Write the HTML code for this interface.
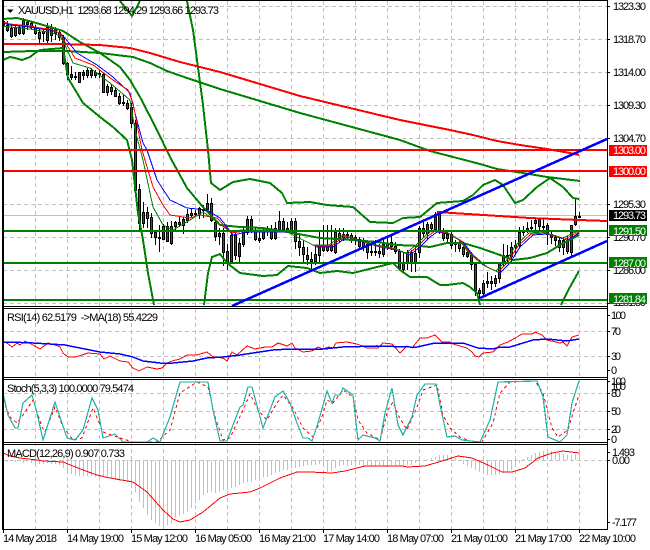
<!DOCTYPE html>
<html><head><meta charset="utf-8"><title>XAUUSD,H1</title>
<style>
html,body{margin:0;padding:0;background:#fff;width:650px;height:550px;overflow:hidden}
svg{display:block;position:absolute;left:0;top:0}
text{font-family:"Liberation Sans",sans-serif;font-size:11px;fill:#000}
.w{fill:#fff}
</style></head><body>
<svg width="650" height="550" viewBox="0 0 650 550" xmlns="http://www.w3.org/2000/svg">
<rect width="650" height="550" fill="#fff"/>
<g fill="none" shape-rendering="crispEdges">
<!-- grid -->
<path stroke="#c0c0c0" stroke-dasharray="4 3" d="M3 6.5H607M3 39.5H607M3 72.5H607M3 105.5H607M3 138.5H607M3 204.5H607M3 237.5H607M3 270.5H607M3 303.5H607M3 331.5H607M3 356.5H607M3 393.5H607M3 411.5H607M3 429.5H607M3 460.5H607"/>
<path stroke="#c0c0c0" stroke-dasharray="4 3" d="M35.5 1V529M67.5 1V529M99.5 1V529M131.5 1V529M163.5 1V529M195.5 1V529M227.5 1V529M259.5 1V529M291.5 1V529M323.5 1V529M355.5 1V529M387.5 1V529M419.5 1V529M451.5 1V529M483.5 1V529M515.5 1V529M547.5 1V529M579.5 1V529"/>
<path stroke="#c0c0c0" d="M3 215.5H607"/>
<!-- MACD histogram -->
<path stroke="#c0c0c0" d="M3.5 460V462M7.5 460V462M11.5 460V461M15.5 460V462M19.5 460V461M23.5 460V463M27.5 460V462M31.5 460V463M35.5 460V463M39.5 460V464M43.5 460V464M47.5 460V463M51.5 460V464M55.5 460V464M59.5 460V465M63.5 460V468M67.5 460V472M71.5 460V474M75.5 460V475M79.5 460V476M83.5 460V476M87.5 460V476M91.5 460V476M95.5 460V477M99.5 460V478M103.5 460V476M107.5 460V476M111.5 460V478M115.5 460V480M119.5 460V481M123.5 460V481M127.5 460V482M131.5 460V484M135.5 460V492M139.5 460V502M143.5 460V508M147.5 460V515M151.5 460V520M155.5 460V523M159.5 460V526M163.5 460V527M167.5 460V525M171.5 460V523M175.5 460V518M179.5 460V516M183.5 460V514M187.5 460V512M191.5 460V508M195.5 460V503M199.5 460V500M203.5 460V495M207.5 460V493M211.5 460V492M215.5 460V493M219.5 460V492M223.5 460V490M227.5 460V490M231.5 460V488M235.5 460V487M239.5 460V485M243.5 460V483M247.5 460V482M251.5 460V482M255.5 460V480M259.5 460V478M263.5 460V477M267.5 460V477M271.5 460V475M275.5 460V473M279.5 460V472M283.5 460V470M287.5 460V470M291.5 460V468M295.5 460V468M299.5 460V467M303.5 460V466M307.5 460V465M311.5 460V465M315.5 460V465M319.5 460V464M323.5 460V464M327.5 460V472M331.5 460V471M335.5 460V468M339.5 460V466M343.5 460V465M347.5 460V466M351.5 460V465M355.5 460V466M359.5 460V465M363.5 460V466M367.5 460V465M371.5 460V466M375.5 460V466M379.5 460V465M383.5 460V466M387.5 460V466M391.5 460V465M395.5 460V466M399.5 460V465M403.5 460V466M407.5 460V465M411.5 460V465M415.5 460V463M419.5 460V462M423.5 460V461M427.5 460V459M431.5 460V458M435.5 460V457M439.5 460V455M443.5 460V455M447.5 460V455M451.5 460V456M455.5 460V458M459.5 460V460M463.5 460V464M467.5 460V466M471.5 460V468M475.5 460V470M479.5 460V472M483.5 460V474M487.5 460V475M491.5 460V475M495.5 460V475M499.5 460V474M503.5 460V473M507.5 460V472M511.5 460V470M515.5 460V467M519.5 460V463M523.5 460V459M527.5 460V457M531.5 460V455M535.5 460V453M539.5 460V452M543.5 460V451M547.5 460V450M551.5 460V451M555.5 460V452M559.5 460V453M563.5 460V454M567.5 460V455M571.5 460V455M575.5 460V454M579.5 460V453"/>
<!-- candle wicks -->
<path stroke="#000" d="M3.5 19V29M7.5 21V32M11.5 24V38M15.5 24V37M19.5 25V35M23.5 18V35M27.5 20V30M31.5 21V30M35.5 25V35M39.5 29V44M43.5 28V42M47.5 23V44M51.5 24V42M55.5 27V40M59.5 29V41M63.5 35V65M67.5 62V80M71.5 66V80M75.5 72V80M79.5 72V83M83.5 70V80M87.5 68V78M91.5 68V78M95.5 70V78M99.5 70V78M103.5 73V93M107.5 84V96M111.5 84V95M115.5 87V97M119.5 93V105M123.5 95V106M127.5 100V110M131.5 103V128M135.5 120V192M139.5 184V230M143.5 202V228M147.5 207V228M151.5 213V238M155.5 232V245M159.5 225V252M163.5 224V240M167.5 222V242M171.5 221V245M175.5 221V232M179.5 217V227M183.5 217V234M187.5 209V223M191.5 209V218M195.5 210V217M199.5 207V219M203.5 205V218M207.5 194V213M211.5 198V222M215.5 220V241M219.5 228V245M223.5 228V266M227.5 244V270M231.5 230V263M235.5 230V260M239.5 238V262M243.5 228V247M247.5 216V235M251.5 216V233M255.5 228V241M259.5 232V243M263.5 228V240M267.5 226V236M271.5 225V240M275.5 222V240M279.5 211V231M283.5 218V232M287.5 222V233M291.5 218V233M295.5 218V249M299.5 233V256M303.5 240V262M307.5 247V265M311.5 252V272M315.5 245V265M319.5 232V263M323.5 225V252M327.5 225V252M331.5 225V252M335.5 228V254M339.5 228V243M343.5 228V241M347.5 230V240M351.5 233V243M355.5 235V245M359.5 237V250M363.5 238V251M367.5 243V259M371.5 245V256M375.5 240V256M379.5 244V258M383.5 240V257M387.5 237V250M391.5 235V250M395.5 242V254M399.5 249V270M403.5 252V272M407.5 250V270M411.5 250V272M415.5 246V272M419.5 226V258M423.5 222V238M427.5 222V240M431.5 222V232M435.5 212V232M439.5 212V234M443.5 228V241M447.5 232V243M451.5 232V249M455.5 240V252M459.5 240V252M463.5 245V257M467.5 248V258M471.5 252V270M475.5 262V296M479.5 288V300M483.5 280V296M487.5 272V288M491.5 276V290M495.5 275V287M499.5 262V283M503.5 244V266M507.5 245V262M511.5 242V262M515.5 240V255M519.5 227V248M523.5 226V236M527.5 222V233M531.5 220V232M535.5 219V230M539.5 218V230M543.5 219V230M547.5 223V245M551.5 232V244M555.5 235V246M559.5 238V252M563.5 237V255M567.5 236V254M571.5 225V257M575.5 198V226M579.5 212V218"/>
<!-- red bodies -->
<path stroke="#000" fill="#ff0000" d="M2.5 21.5h2v4h-2zM6.5 25.5h2v5h-2zM10.5 28.5h2v8h-2zM18.5 27.5h2v6h-2zM26.5 22.5h2v2h-2zM30.5 23.5h2v4h-2zM38.5 32.5h2v6h-2zM50.5 27.5h2v8h-2zM58.5 32.5h2v5h-2zM62.5 37.5h2v26h-2zM66.5 63.5h2v11h-2zM90.5 70.5h2v5h-2zM102.5 74.5h2v18h-2zM106.5 86.5h2v6h-2zM114.5 90.5h2v6h-2zM118.5 96.5h2v7h-2zM126.5 103.5h2v5h-2zM130.5 107.5h2v16h-2zM134.5 123.5h2v67h-2zM138.5 189.5h2v34h-2zM146.5 212.5h2v6h-2zM150.5 217.5h2v16h-2zM154.5 232.5h2v5h-2zM166.5 226.5h2v15h-2zM210.5 203.5h2v17h-2zM214.5 222.5h2v14h-2zM222.5 233.5h2v19h-2zM226.5 251.5h2v11h-2zM234.5 235.5h2v20h-2zM250.5 219.5h2v12h-2zM254.5 230.5h2v9h-2zM270.5 230.5h2v8h-2zM282.5 221.5h2v8h-2zM286.5 228.5h2v3h-2zM294.5 221.5h2v20h-2zM306.5 255.5h2v4h-2zM310.5 259.5h2v2h-2zM322.5 245.5h2v5h-2zM326.5 245.5h2v5h-2zM330.5 245.5h2v5h-2zM338.5 233.5h2v5h-2zM346.5 234.5h2v1h-2zM350.5 235.5h2v3h-2zM354.5 237.5h2v3h-2zM358.5 239.5h2v7h-2zM366.5 244.5h2v8h-2zM386.5 243.5h2v4h-2zM390.5 242.5h2v4h-2zM394.5 246.5h2v5h-2zM398.5 251.5h2v17h-2zM410.5 252.5h2v11h-2zM422.5 228.5h2v5h-2zM430.5 224.5h2v4h-2zM438.5 214.5h2v16h-2zM442.5 230.5h2v8h-2zM450.5 234.5h2v11h-2zM458.5 242.5h2v6h-2zM462.5 247.5h2v7h-2zM466.5 252.5h2v4h-2zM470.5 255.5h2v9h-2zM474.5 264.5h2v26h-2zM494.5 278.5h2v5h-2zM506.5 255.5h2v1h-2zM538.5 219.5h2v7h-2zM546.5 225.5h2v9h-2zM550.5 234.5h2v3h-2zM554.5 237.5h2v3h-2zM558.5 240.5h2v7h-2zM566.5 240.5h2v11h-2z"/>
<!-- green bodies -->
<path stroke="#000" fill="#008000" d="M14.5 27.5h2v8h-2zM22.5 20.5h2v13h-2zM34.5 27.5h2v6h-2zM42.5 31.5h2v2h-2zM46.5 27.5h2v13h-2zM54.5 29.5h2v4h-2zM70.5 74.5h2v3h-2zM74.5 76.5h2v1h-2zM78.5 72.5h2v10h-2zM82.5 72.5h2v3h-2zM86.5 70.5h2v5h-2zM94.5 72.5h2v3h-2zM98.5 73.5h2v1h-2zM110.5 87.5h2v4h-2zM122.5 102.5h2v1h-2zM142.5 212.5h2v11h-2zM158.5 237.5h2v1h-2zM162.5 226.5h2v13h-2zM170.5 226.5h2v17h-2zM174.5 222.5h2v4h-2zM178.5 222.5h2v2h-2zM182.5 219.5h2v6h-2zM186.5 214.5h2v6h-2zM190.5 213.5h2v2h-2zM194.5 213.5h2v1h-2zM198.5 208.5h2v6h-2zM202.5 209.5h2v1h-2zM206.5 203.5h2v6h-2zM218.5 233.5h2v3h-2zM230.5 235.5h2v26h-2zM238.5 243.5h2v13h-2zM242.5 232.5h2v12h-2zM246.5 219.5h2v13h-2zM258.5 238.5h2v2h-2zM262.5 231.5h2v7h-2zM266.5 229.5h2v2h-2zM274.5 228.5h2v10h-2zM278.5 221.5h2v8h-2zM290.5 221.5h2v10h-2zM298.5 241.5h2v6h-2zM302.5 247.5h2v7h-2zM314.5 254.5h2v7h-2zM318.5 245.5h2v10h-2zM334.5 232.5h2v20h-2zM342.5 234.5h2v3h-2zM362.5 242.5h2v4h-2zM370.5 251.5h2v1h-2zM374.5 251.5h2v1h-2zM378.5 251.5h2v2h-2zM382.5 244.5h2v10h-2zM402.5 263.5h2v6h-2zM406.5 252.5h2v11h-2zM414.5 253.5h2v10h-2zM418.5 228.5h2v24h-2zM426.5 224.5h2v9h-2zM434.5 214.5h2v15h-2zM446.5 234.5h2v4h-2zM454.5 242.5h2v2h-2zM478.5 290.5h2v3h-2zM482.5 283.5h2v10h-2zM486.5 281.5h2v2h-2zM490.5 281.5h2v2h-2zM498.5 263.5h2v15h-2zM502.5 255.5h2v8h-2zM510.5 247.5h2v9h-2zM514.5 245.5h2v2h-2zM518.5 232.5h2v13h-2zM522.5 230.5h2v2h-2zM526.5 228.5h2v2h-2zM530.5 227.5h2v1h-2zM534.5 220.5h2v3h-2zM542.5 226.5h2v1h-2zM562.5 240.5h2v7h-2zM570.5 225.5h2v27h-2zM574.5 216.5h2v8h-2zM578.5 216.5h2v1h-2z"/>
<!-- Bollinger bands and MAs -->
<g stroke="#008000" stroke-width="2">
<path d="M3 19L17 18 33 22 50 27 63 31 80 42 100 53 120 67 130 80 140 97 157 130 170 157 187 188 203 207 220 225 240 227 263 228 293 233 320 238 353 240 377 242 397 245 420 246 430 247 447 243 463 243 480 248 500 255 513 260 530 258 547 253 560 245 579 235"/>
<path d="M3 60L10 57 15 58 22 60 30 57 35 53 40 50 63 48 68 78 83 103 100 117 113 127 127 140 132 160 138 213 143 240 148 273 154 305"/>
<path d="M204 305L208 273 212 257 220 254 227 263 240 273 263 276 277 275 288 266 307 268 320 273 337 271 353 273 377 267 393 263 400 270 410 277 427 277 440 285 447 285 463 283 470 287 477 293 480 305"/>
<path d="M561 305L570 287 579 271"/>
<path d="M187 1L193 30 197 60 203 105 208 150 211 183 220 190 233 182 250 179 270 183 282 193 287 203 310 202 327 205 353 207 370 222 393 223 403 218 420 217 437 203 463 201 473 195 483 185 495 180 503 185 515 203 523 200 537 187 550 178 563 187 573 198 579 199"/>
<path d="M120 1L132 16 140 1"/>
<path d="M3 52L33 51 67 51 100 53 133 57 150 63 167 71 187 78 220 89 300 113 400 140 430 151 457 158 480 164 497 169 523 173 547 177 580 181"/>
</g>
<path stroke="#ff0000" stroke-width="2" d="M3 44L60 44 100 45 130 48 150 53 180 62 220 72 300 96 400 120 450 130 473 135 497 141 520 145 547 149 570 153 579 155"/>
<!-- thin MAs -->
<path stroke="#0000ff" d="M3 23L10 25 20 26 30 27 40 29 50 30 60 33 65 38 77 53 97 65 113 77 130 93 135 113 143 143 147 150 157 180 170 200 187 208 207 210 220 218 233 235 247 232 263 232 287 232 303 240 317 247 333 247 347 237 363 242 380 247 397 250 410 255 420 247 430 237 437 232 450 234 463 242 473 255 487 267 500 273 510 263 520 247 533 235 547 234 557 237 567 240 573 237 579 233"/>
<path stroke="#ff0000" d="M3 22L10 24 20 25 30 26 40 28 50 29 60 33 65 42 75 58 93 65 113 80 128 90 133 103 142 150 153 187 163 205 170 215 190 218 200 215 217 218 231 233 245 231 261 231 285 231 301 239 315 246 331 246 345 236 361 241 378 246 395 249 408 254 418 246 428 236 435 231 448 233 461 241 471 254 485 266 498 272 508 262 518 246 531 234 545 233 555 236 565 239 571 236 579 232"/>
<path stroke="#008000" d="M3 26L10 27 20 28 30 29 40 31 50 32 60 36 65 45 73 63 90 68 110 83 130 100 135 130 143 160 153 207 163 225 173 230 190 220 203 212 217 222 229 231 243 230 259 230 283 230 299 238 313 245 329 245 343 235 359 240 376 245 393 248 406 253 416 245 426 235 433 230 446 232 459 240 469 253 483 265 496 271 506 261 516 245 529 233 543 232 553 235 563 238 569 235 578 231"/>
<!-- horizontal lines -->
<g stroke-width="2">
<path stroke="#ff0000" d="M3 150H607M3 171H607"/>
<path stroke="#008000" d="M3 231H607M3 263H607M3 300H607"/>
<path stroke="#ff0000" d="M437 212L530 218 579 220 607 221"/>
<path stroke="#0000ff" stroke-width="2.5" d="M232 306L607 139M480 298L607 241"/>
</g>
<!-- RSI -->
<path stroke="#ff0000" d="M3 342L7 343 12 347 17 343 20 345 25 341 33 345 40 349 48 343 55 345 60 347 63 353 68 357 75 357 82 355 88 353 100 354 104 359 110 356 120 361 128 362 133 368 139 371 147 367 157 369 162 368 167 363 172 361 180 359 187 355 197 355 207 352 213 357 223 358 227 361 232 352 237 355 247 346 255 349 265 347 272 347 278 343 287 346 292 343 295 348 303 352 312 351 318 347 323 349 328 347 333 348 336 343 347 342 357 344 367 348 378 348 383 343 392 344 400 353 407 346 412 348 420 338 427 338 435 335 442 342 450 342 453 344 467 348 472 352 475 356 479 357 483 353 493 352 500 345 508 342 517 337 522 334 532 334 535 332 542 335 547 340 560 343 563 342 567 346 572 337 579 335"/>
<path stroke="#0000ff" stroke-width="1.5" d="M3 342L10 342 33 343 50 344 65 345 80 348 100 352 120 354 133 357 143 361 160 363 173 363 193 361 207 358 223 357 240 355 253 353 273 350 290 349 303 349 323 349 343 347 377 346 410 347 417 347 435 343 463 343 478 348 493 349 500 347 510 347 533 340 547 339 567 341 579 339"/>
<!-- Stochastic -->
<path stroke="#ff0000" stroke-dasharray="3 3" d="M3 400L10 417 17 423 23 415 33 400 42 427 45 432 55 407 63 427 73 440 82 438 93 408 103 432 120 438 133 442 157 442 170 430 180 393 197 382 208 387 215 417 223 440 230 438 243 410 250 394 258 410 267 420 277 403 283 395 293 408 303 428 313 437 322 417 327 400 333 403 343 390 353 397 358 420 367 433 380 440 388 410 393 402 398 415 407 430 417 407 423 390 437 385 443 415 450 428 460 437 470 441 482 442 493 423 500 393 510 382 535 381 543 393 552 428 558 437 568 430 573 413 579 395"/>
<path stroke="#20b2aa" stroke-width="1.2" d="M3 393L8 415 15 428 18 428 23 403 32 395 37 413 43 440 55 402 67 438 75 440 83 430 92 398 98 410 103 438 115 434 123 442 147 442 153 438 160 442 170 417 180 382 208 382 213 410 220 441 227 441 233 425 240 407 243 405 248 387 252 387 263 428 275 397 283 391 290 403 297 423 303 438 308 438 312 441 318 423 327 391 332 403 335 395 340 395 343 388 353 395 358 440 363 435 375 438 380 441 385 413 392 388 398 425 403 435 412 417 417 395 425 384 436 384 440 405 447 437 455 436 462 440 480 442 490 420 498 382 537 381 543 397 548 437 560 442 567 435 572 403 579 381"/>
<!-- MACD -->
<path stroke="#ff0000" d="M3 453L10 456 20 458 37 460 43 461 63 462 83 470 97 475 110 478 133 482 147 492 163 510 173 519 180 522 190 520 203 512 220 498 230 494 250 492 260 488 280 478 297 472 310 472 332 473 345 471 365 466 402 466 408 467 425 466 442 461 458 456 472 458 488 465 502 472 512 472 525 468 538 458 552 453 563 451 579 453"/>
<!-- frames -->
<path stroke="#000" stroke-width="2" d="M3 0V530"/>
<path stroke="#000" d="M2 0.5H608M607.5 0V530M2 306.5H608M2 308.5H608M2 377.5H608M2 379.5H608M2 442.5H608M2 444.5H608M2 529.5H608"/>
<path stroke="#000" d="M607 6.5h3M607 39.5h3M607 72.5h3M607 105.5h3M607 138.5h3M607 204.5h3M607 237.5h3M607 270.5h3M607 303.5h3M607 315.5h3M607 331.5h3M607 356.5h3M607 370.5h3M607 381.5h3M607 393.5h3M607 411.5h3M607 429.5h3M607 439.5h3M607 452.5h3M607 460.5h3M607 522.5h3"/>
<path stroke="#000" d="M3.5 530v3M67.5 530v3M131.5 530v3M195.5 530v3M259.5 530v3M323.5 530v3M387.5 530v3M451.5 530v3M515.5 530v3M579.5 530v3"/>
</g>
<!-- header triangle -->
<path d="M7 9.5h6.5l-3.2 3.5z" fill="#000"/>
<!-- main scale -->
<text x="613" y="10" textLength="33">1323.30</text>
<text x="613" y="43" textLength="33">1318.70</text>
<text x="613" y="76" textLength="33">1314.00</text>
<text x="613" y="109" textLength="33">1309.30</text>
<text x="613" y="142" textLength="33">1304.70</text>
<text x="613" y="208" textLength="33">1295.30</text>
<text x="613" y="241" textLength="33">1290.70</text>
<text x="613" y="274" textLength="33">1286.00</text>
<text x="613" y="306" textLength="33">1281.30</text>
<rect x="609" y="145" width="38" height="11" fill="#ff0000"/>
<text x="613" y="154" textLength="33" class="w">1303.00</text>
<rect x="609" y="166" width="38" height="11" fill="#ff0000"/>
<text x="613" y="175" textLength="33" class="w">1300.00</text>
<rect x="609" y="210" width="38" height="11" fill="#000"/>
<text x="613" y="219" textLength="33" class="w">1293.73</text>
<rect x="609" y="225" width="38" height="11" fill="#008000"/>
<text x="613" y="235" textLength="33" class="w">1291.50</text>
<rect x="609" y="257" width="38" height="11" fill="#008000"/>
<text x="613" y="267" textLength="33" class="w">1287.00</text>
<rect x="609" y="293" width="38" height="11" fill="#008000"/>
<text x="613" y="303" textLength="33" class="w">1281.84</text>
<!-- panel labels -->
<text x="18" y="14" textLength="201">XAUUSD,H1&#160;&#160;1293.68 1294.29 1293.66 1293.73</text>
<text x="7" y="321" textLength="151">RSI(14) 62.5179&#160;&#160;-&gt;MA(18) 55.4229</text>
<text x="7" y="392" textLength="127">Stoch(5,3,3) 100.0000 79.5474</text>
<text x="7" y="457" textLength="118">MACD(12,26,9) 0.907 0.733</text>
<!-- sub scales -->
<text x="611" y="319" textLength="15">100</text>
<text x="611" y="335" textLength="10">70</text>
<text x="611" y="360" textLength="10">30</text>
<text x="611" y="374" textLength="5">0</text>
<text x="611" y="385" textLength="15">100</text>
<text x="611" y="390" textLength="15">100</text>
<text x="611" y="397" textLength="10">80</text>
<text x="611" y="415" textLength="10">50</text>
<text x="611" y="433" textLength="10">20</text>
<text x="611" y="443" textLength="5">0</text>
<text x="612" y="456" textLength="23">1.493</text>
<text x="612" y="464" textLength="18">0.00</text>
<text x="612" y="526" textLength="25">-7.177</text>
<!-- time axis -->
<text x="3" y="542" textLength="54">14 May 2018</text>
<text x="67" y="542" textLength="57">14 May 19:00</text>
<text x="131" y="542" textLength="57">15 May 12:00</text>
<text x="195" y="542" textLength="57">16 May 05:00</text>
<text x="259" y="542" textLength="57">16 May 21:00</text>
<text x="323" y="542" textLength="57">17 May 14:00</text>
<text x="387" y="542" textLength="57">18 May 07:00</text>
<text x="451" y="542" textLength="57">21 May 01:00</text>
<text x="515" y="542" textLength="57">21 May 17:00</text>
<text x="579" y="542" textLength="57">22 May 10:00</text>
</svg>
</body></html>
